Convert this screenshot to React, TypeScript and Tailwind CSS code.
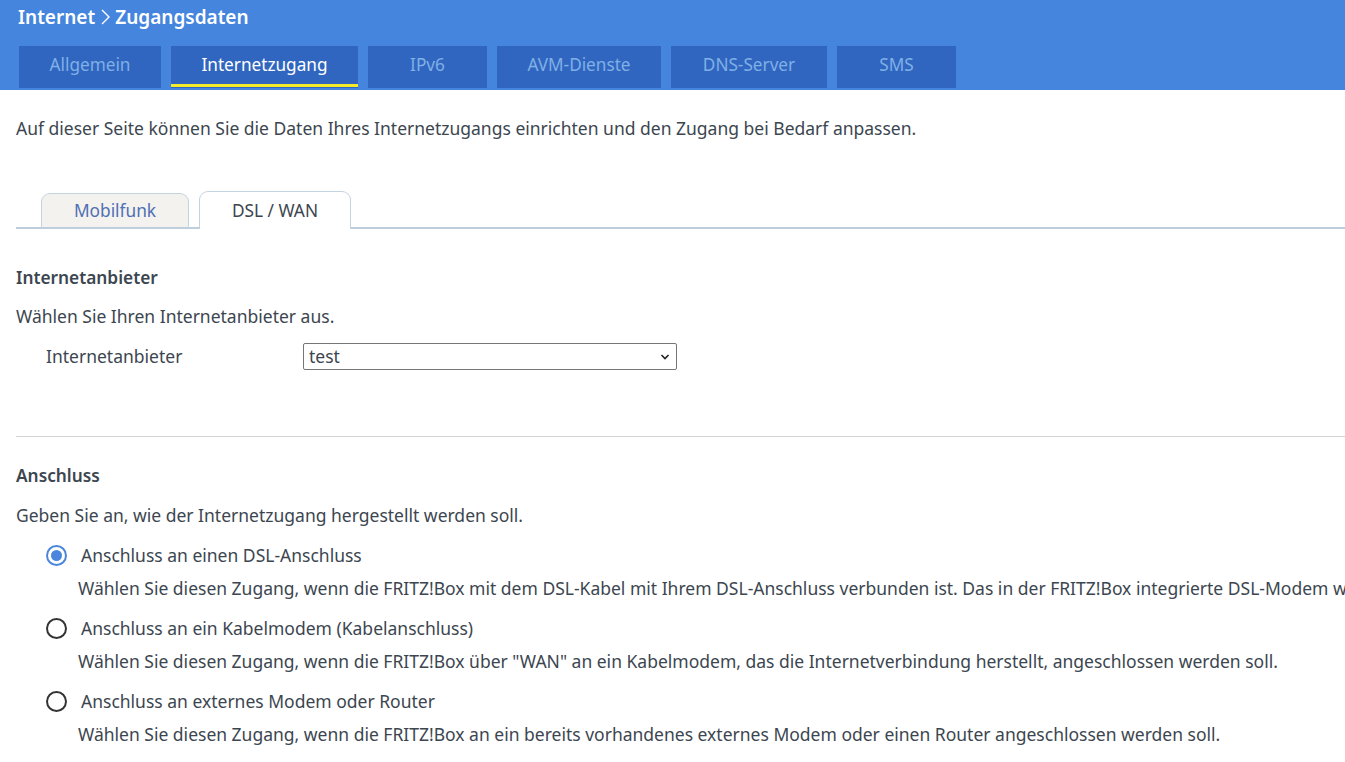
import React, { useState } from "react";

const mainTabs = ["Allgemein", "Internetzugang", "IPv6", "AVM-Dienste", "DNS-Server", "SMS"];
const tabWidths = ["w-[142px]", "w-[187px]", "w-[119px]", "w-[164px]", "w-[156px]", "w-[119px]"];

const options = [
  {
    label: "Anschluss an einen DSL-Anschluss",
    desc: "Wählen Sie diesen Zugang, wenn die FRITZ!Box mit dem DSL-Kabel mit Ihrem DSL-Anschluss verbunden ist. Das in der FRITZ!Box integrierte DSL-Modem wird dann für die Internetverbindung genutzt.",
  },
  {
    label: "Anschluss an ein Kabelmodem (Kabelanschluss)",
    desc: 'Wählen Sie diesen Zugang, wenn die FRITZ!Box über "WAN" an ein Kabelmodem, das die Internetverbindung herstellt, angeschlossen werden soll.',
  },
  {
    label: "Anschluss an externes Modem oder Router",
    desc: "Wählen Sie diesen Zugang, wenn die FRITZ!Box an ein bereits vorhandenes externes Modem oder einen Router angeschlossen werden soll.",
  },
];

const App = () => {
  const [choice, setChoice] = useState(0);

  return (
    <div className="w-[1345px] h-[762px] overflow-hidden bg-white text-[#3c4650] font-['Noto_Sans','Liberation_Sans',sans-serif] text-[17.5px] whitespace-nowrap">
      <header className="h-[90px] bg-[#4585dd] pt-[3px]">
        <div className="flex items-center h-[28px] pl-[18px] text-white text-[19px] font-semibold">
          Internet
          <svg width="14" height="20" viewBox="0 0 14 20" className="mx-[3px]">
            <path d="M4 3 L11 10 L4 17" fill="none" stroke="white" strokeWidth="1.4" />
          </svg>
          Zugangsdaten
        </div>
        <nav className="flex gap-[10px] pl-[19px] mt-[15px]">
          {mainTabs.map((t, i) => (
            <div
              key={t}
              className={`${tabWidths[i]} h-[42px] bg-[#3166c0] flex items-center justify-center text-[17.2px] pb-[4px] relative ${
                i === 1 ? "text-white" : "text-[#7fb0e6]"
              }`}
            >
              {t}
              {i === 1 && <span className="absolute left-0 right-0 bottom-[1px] h-[3px] bg-[#f2ec2a]" />}
            </div>
          ))}
        </nav>
      </header>

      <main className="pl-[16px]">
        <p className="mt-[27px] leading-[22px]">
          Auf dieser Seite können Sie die Daten Ihres Internetzugangs einrichten und den Zugang bei Bedarf anpassen.
        </p>

        <div className="mt-[52px] flex items-end border-b-2 border-[#bfcedc] pl-[25px] gap-[10px]">
          <div className="w-[148px] h-[36px] mb-[-2px] bg-[#f3f2ef] border border-[#c4d3e0] border-b-2 border-b-[#bfcedc] rounded-t-[9px] flex items-center justify-center text-[#4f6fb3] text-[17.3px]">
            Mobilfunk
          </div>
          <div className="w-[152px] h-[38px] mb-[-2px] bg-white border border-b-0 border-[#c4d3e0] rounded-t-[9px] flex items-center justify-center text-[17.3px]">
            DSL / WAN
          </div>
        </div>

        <h2 className="mt-[38px] font-semibold text-[17.3px] leading-[22px]">Internetanbieter</h2>
        <p className="mt-[16px] leading-[22px]">Wählen Sie Ihren Internetanbieter aus.</p>
        <div className="mt-[16px] flex items-center pl-[30px]">
          <span className="w-[257px]">Internetanbieter</span>
          <div className="w-[374px] h-[27px] border border-[#767676] rounded-[2px] flex items-center justify-between pl-[5px] pr-[6px]">
            <span>test</span>
            <svg width="10" height="8" viewBox="0 0 10 8">
              <path d="M1.5 2 L5 5.5 L8.5 2" fill="none" stroke="#222" strokeWidth="1.6" />
            </svg>
          </div>
        </div>

        <hr className="mt-[66px] border-0 border-t border-[#d4d4d4]" />

        <h2 className="mt-[28px] font-semibold text-[17.3px] leading-[22px]">Anschluss</h2>
        <p className="mt-[17px] leading-[22px]">Geben Sie an, wie der Internetzugang hergestellt werden soll.</p>

        <div className="mt-[15px] flex flex-col gap-[15px]">
          {options.map((o, i) => (
            <div key={o.label} className="pl-[30px]">
              <label className="flex items-center h-[28px] cursor-pointer" onClick={() => setChoice(i)}>
                <span
                  className={`w-[21px] h-[21px] rounded-full border-2 flex items-center justify-center ${
                    choice === i ? "border-[#4a87dc]" : "border-[#333]"
                  }`}
                >
                  {choice === i && <span className="w-[11px] h-[11px] rounded-full bg-[#4a87dc]" />}
                </span>
                <span className="ml-[14px]">{o.label}</span>
              </label>
              <p className="ml-[32px] mt-[8px] leading-[22px]">{o.desc}</p>
            </div>
          ))}
        </div>
      </main>
    </div>
  );
};

export default App;
